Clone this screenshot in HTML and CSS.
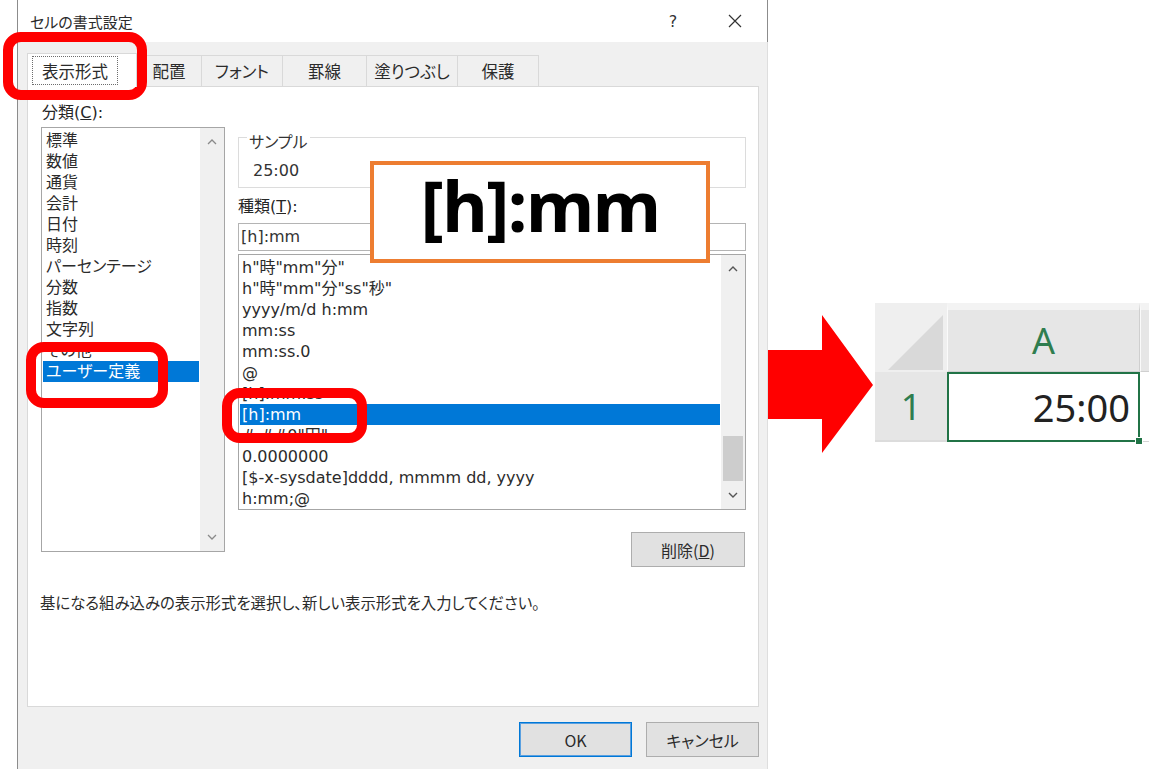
FILE: index.html
```html
<!DOCTYPE html>
<html lang="ja">
<head>
<meta charset="utf-8">
<title>セルの書式設定</title>
<link rel="stylesheet" href="styles.css">
</head>
<body>
<div class="page">
  <div class="dialog">
    <div class="titlebar">
      <span class="title">セルの書式設定</span>
      <span class="help">?</span>
      <span class="close"><svg width="14" height="14" viewBox="0 0 14 14"><path d="M1 1L13 13M13 1L1 13" stroke="#333" stroke-width="1.2" fill="none"/></svg></span>
    </div>
    <div class="body">
      <div class="tabs">
        <div class="tab active t1"><span class="focus">表示形式</span></div>
        <div class="tab t2">配置</div>
        <div class="tab t3">フォント</div>
        <div class="tab t4">罫線</div>
        <div class="tab t5">塗りつぶし</div>
        <div class="tab t6">保護</div>
      </div>
      <div class="panel">
        <div class="cols">
          <div class="col-left">
            <div class="label">分類(<u>C</u>):</div>
            <div class="listbox left-list">
              <div class="items">
                <div class="item">標準</div>
                <div class="item">数値</div>
                <div class="item">通貨</div>
                <div class="item">会計</div>
                <div class="item">日付</div>
                <div class="item">時刻</div>
                <div class="item">パーセンテージ</div>
                <div class="item">分数</div>
                <div class="item">指数</div>
                <div class="item">文字列</div>
                <div class="item">その他</div>
                <div class="item sel">ユーザー定義</div>
              </div>
              <div class="scroll">
                <div class="arrow-box"><svg width="10" height="6" viewBox="0 0 10 6"><polyline points="1,5 5,1 9,5" fill="none" stroke="#8a8a8a" stroke-width="1.3"/></svg></div>
                <div class="track"></div>
                <div class="arrow-box"><svg width="10" height="6" viewBox="0 0 10 6"><polyline points="1,1 5,5 9,1" fill="none" stroke="#8a8a8a" stroke-width="1.3"/></svg></div>
              </div>
            </div>
          </div>
          <div class="col-right">
            <fieldset class="sample">
              <legend>サンプル</legend>
              <div class="sample-val">25:00</div>
            </fieldset>
            <div class="label label-type">種類(<u>T</u>):</div>
            <div class="input">[h]:mm</div>
            <div class="listbox type-list">
              <div class="items">
                <div class="item">h"時"mm"分"</div>
                <div class="item">h"時"mm"分"ss"秒"</div>
                <div class="item">yyyy/m/d h:mm</div>
                <div class="item">mm:ss</div>
                <div class="item">mm:ss.0</div>
                <div class="item">@</div>
                <div class="item">[h]:mm:ss</div>
                <div class="item sel">[h]:mm</div>
                <div class="item">#,##0"円"</div>
                <div class="item">0.0000000</div>
                <div class="item">[$-x-sysdate]dddd, mmmm dd, yyyy</div>
                <div class="item">h:mm;@</div>
              </div>
              <div class="scroll">
                <div class="arrow-box"><svg width="10" height="6" viewBox="0 0 10 6"><polyline points="1,5 5,1 9,5" fill="none" stroke="#555" stroke-width="1.4"/></svg></div>
                <div class="track"><div class="thumb"></div></div>
                <div class="arrow-box"><svg width="10" height="6" viewBox="0 0 10 6"><polyline points="1,1 5,5 9,1" fill="none" stroke="#555" stroke-width="1.4"/></svg></div>
              </div>
            </div>
            <div class="del-row"><div class="btn del">削除(<u>D</u>)</div></div>
          </div>
        </div>
        <div class="desc">基になる組み込みの表示形式を選択し、新しい表示形式を入力してください。</div>
      </div>
      <div class="buttons">
        <div class="btn ok">OK</div>
        <div class="btn cancel">キャンセル</div>
      </div>
    </div>
  </div>

  <div class="side">
    <svg class="arrow" width="107" height="140" viewBox="0 0 107 140"><polygon points="0,36 54,36 54,1 105,71 54,139 54,105 0,105" fill="#ff0000"/></svg>
    <div class="sheet">
      <div class="corner"><svg width="72" height="69" viewBox="0 0 72 69"><polygon points="13,67 68,67 68,12" fill="#d9d9d9"/></svg></div>
      <div class="colhead">A</div>
      <div class="colhead colhead-b"></div>
      <div class="rowhead">1</div>
      <div class="cell">25:00<span class="handle"></span></div>
      <div class="cell-b"></div>
    </div>
  </div>

  <div class="mark m1"></div>
  <div class="mark m2"></div>
  <div class="mark m3"></div>
  <div class="callout">[h]:mm</div>
</div>
</body>
</html>
```

FILE: styles.css
```css
* { box-sizing: border-box; }

body {
  margin: 0;
  background: #fff;
  color: #262626;
  font-family: "DejaVu Sans", "Noto Sans CJK JP", sans-serif;
  font-feature-settings: "palt";
}

.page {
  position: relative;
  display: flex;
  width: 1149px;
  height: 769px;
  overflow: hidden;
  padding-left: 17px;
}

/* ---------- dialog ---------- */
.dialog {
  flex-shrink: 0;
  width: 751px;
  height: 769px;
  border-left: 1px solid #8c8c8c;
  display: flex;
  flex-direction: column;
}

.titlebar {
  height: 42px;
  flex-shrink: 0;
  background: #fff;
  border-right: 1px solid #8c8c8c;
  display: flex;
  align-items: center;
  padding-left: 12px;
}

.title {
  flex: 1;
  font-family: "Noto Sans CJK JP", sans-serif;
  font-size: 15px;
  color: #2b2b2b;
}

.help {
  width: 30px;
  text-align: center;
  font-size: 16px;
  margin-right: 24px;
  color: #333;
}

.close {
  width: 46px;
  display: flex;
  justify-content: center;
  margin-right: 9px;
}

.body {
  flex: 1;
  background: #f0f0f0;
  border-right: 1px solid #dedede;
  padding: 13px 8px 0 9px;
}

.tabs {
  display: flex;
  align-items: flex-end;
  height: 31px;
}

.tab {
  height: 31px;
  border-top: 1px solid #d9d9d9;
  border-right: 1px solid #d9d9d9;
  background: #f0f0f0;
  display: flex;
  align-items: center;
  justify-content: center;
  font-family: "Noto Sans CJK JP", sans-serif;
  font-size: 16.5px;
  color: #2b2b2b;
}

.tab.active {
  position: relative;
  z-index: 1;
  height: 34px;
  margin-bottom: -1px;
  background: #fff;
  border-left: 1px solid #d9d9d9;
  justify-content: flex-start;
  padding-left: 4px;
}

.focus {
  width: 86px;
  height: 29px;
  border: 1px dotted #6d6d6d;
  display: flex;
  align-items: center;
  justify-content: center;
}

.t1 { width: 110px; }
.t2 { width: 65px; }
.t3 { width: 81px; }
.t4 { width: 84px; }
.t5 { width: 91px; }
.t6 { width: 81px; }

.panel {
  height: 621px;
  background: #fff;
  border: 1px solid #d9d9d9;
  padding: 16px 10px 0 13px;
}

.cols {
  display: grid;
  grid-template-columns: 184px 508px;
  column-gap: 13px;
}

.label {
  height: 20px;
  line-height: 20px;
  font-size: 16px;
  padding-left: 1px;
  white-space: nowrap;
}

.listbox {
  display: flex;
  border: 1px solid #a6a6a6;
  background: #fff;
}

.left-list {
  height: 425px;
  margin-top: 4px;
}

.items {
  flex: 1;
  padding: 2px 1px 0;
  overflow: hidden;
}

.item {
  height: 21px;
  line-height: 21px;
  font-size: 16px;
  padding-left: 3px;
  white-space: nowrap;
  color: #2b2b2b;
}

.type-list .item { padding-left: 2px; }

.item.sel {
  background: #0078d7;
  color: #fff;
}

.scroll {
  width: 24px;
  flex-shrink: 0;
  background: #f0f0f0;
  display: flex;
  flex-direction: column;
}

.arrow-box {
  height: 28px;
  display: flex;
  align-items: center;
  justify-content: center;
}

.track {
  flex: 1;
  display: flex;
  flex-direction: column;
  justify-content: flex-end;
  align-items: center;
}

.thumb {
  width: 20px;
  height: 45px;
  background: #cdcdcd;
}

.sample {
  margin: 20px 0 0;
  min-width: 0;
  width: 100%;
  border: 1px solid #dcdcdc;
  padding: 10px 14px 6px;
}

.sample legend {
  margin-left: -6px;
  padding: 8px 2px 0;
  line-height: 20px;
  font-family: "Noto Sans CJK JP", sans-serif;
  font-size: 16px;
  color: #333;
}

.sample-val {
  height: 20px;
  line-height: 20px;
  font-size: 16px;
  color: #333;
}

.label-type { margin-top: 9px; padding-left: 0; }

.input {
  height: 28px;
  margin-top: 6px;
  border: 1px solid #b4b4b4;
  padding-left: 2px;
  line-height: 26px;
  font-size: 16px;
  color: #333;
}

.type-list {
  height: 256px;
  margin-top: 3px;
}

.del-row {
  display: flex;
  justify-content: flex-end;
  margin-top: 22px;
  padding-right: 1px;
}

.btn {
  height: 35px;
  background: #e1e1e1;
  border: 1px solid #adadad;
  display: flex;
  align-items: center;
  justify-content: center;
  font-family: "Noto Sans CJK JP", sans-serif;
  font-size: 16px;
  color: #2b2b2b;
}

.del { width: 114px; }

.desc {
  margin-top: 25px;
  margin-left: -1px;
  line-height: 20px;
  font-family: "Noto Sans CJK JP", sans-serif;
  font-size: 15.4px;
  color: #2b2b2b;
  white-space: nowrap;
}

.buttons {
  display: flex;
  justify-content: flex-end;
  gap: 14px;
  margin-top: 15px;
}

.ok, .cancel { width: 113px; }
.ok { border: 1px solid #0078d7; box-shadow: inset 0 0 0 1px #5aa0e0; }

/* ---------- right side: sheet ---------- */
.side {
  display: flex;
  align-items: flex-start;
  padding-top: 303px;
}

.arrow {
  flex-shrink: 0;
  margin-top: 11px;
  display: block;
}

.sheet {
  display: grid;
  grid-template-columns: 72px 193px 9px;
  grid-template-rows: 69px 70px;
  background: #f3f3f3;
  font-family: "Noto Sans", sans-serif;
}

.corner { background: #efefef; }
.corner svg { display: block; }

.colhead {
  background: #e6e6e6;
  border-top: 7px solid #f3f3f3;
  border-left: 1px solid #fafafa;
  border-right: 1px solid #cfcfcf;
  border-bottom: 1px solid #d0d0d0;
  color: #2f7d4f;
  font-size: 36px;
  display: flex;
  align-items: center;
  justify-content: center;
}

.colhead-b { border-right: none; }

.rowhead {
  background: #e6e6e6;
  border-bottom: 2px solid #dcdcdc;
  color: #2f7d4f;
  font-size: 36px;
  display: flex;
  align-items: center;
  justify-content: center;
}

.cell {
  position: relative;
  background: #fff;
  border: 2px solid #217346;
  font-size: 38px;
  color: #222;
  display: flex;
  align-items: center;
  justify-content: flex-end;
  padding-right: 8px;
}

.handle {
  position: absolute;
  right: -5px;
  bottom: -5px;
  width: 8px;
  height: 8px;
  background: #217346;
  border: 1px solid #fff;
}

.cell-b {
  background: #fff;
  border-bottom: 1px solid #d4d4d4;
}

/* ---------- annotations ---------- */
.mark {
  position: absolute;
  border: 10px solid #ff0000;
  border-radius: 18px;
}

.m1 { left: 3px; top: 32px; width: 144px; height: 68px; }
.m2 { left: 26px; top: 342px; width: 142px; height: 66px; }
.m3 { left: 222px; top: 388px; width: 145px; height: 55px; }

.callout {
  position: absolute;
  left: 370px;
  top: 161px;
  width: 340px;
  height: 102px;
  border: 4px solid #ed7d31;
  background: #fff;
  display: flex;
  align-items: center;
  justify-content: center;
  font-family: "Noto Sans", sans-serif;
  font-weight: 700;
  font-size: 70px;
  letter-spacing: -1.5px;
  color: #000;
  padding-bottom: 14px;
}
```
